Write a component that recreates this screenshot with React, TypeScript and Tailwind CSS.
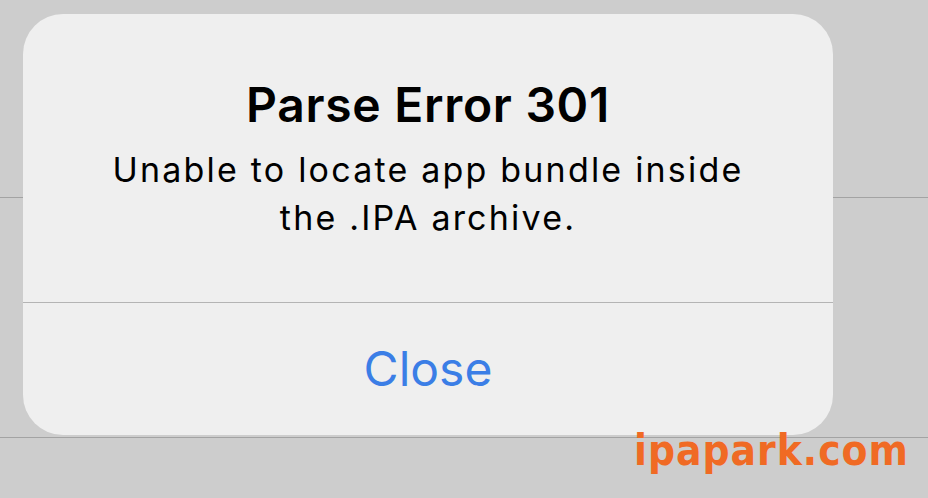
import React from "react";

export default function App() {
  return (
    <div className="relative w-[928px] h-[498px] overflow-hidden bg-[#cdcdcd]">
      {/* background rows */}
      <div className="flex flex-col">
        <div className="h-[198px] border-b border-[#a3a3a3]" />
        <div className="h-[240px] border-b border-[#a3a3a3]" />
      </div>

      {/* alert dialog */}
      <div
        className="absolute left-[23px] top-[14px] w-[810px] h-[421px] rounded-[40px] bg-[#efefef] flex flex-col"
        style={{ fontFamily: "Inter, 'Liberation Sans', sans-serif" }}
      >
        <div className="h-[288px] flex flex-col items-center pt-[67px] text-black">
          <div className="text-[48px] leading-[48px] font-semibold tracking-[0.7px]">Parse Error 301</div>
          <div className="mt-[17px] text-[34px] leading-[48px] text-center tracking-[2.2px]">
            Unable to locate app bundle inside
            <br />
            the .IPA archive.
          </div>
        </div>
        <div className="h-px bg-[#b4b4b4]" />
        <div className="flex-1 flex items-center justify-center">
          <div className="text-[48px] leading-[48px] text-[#3b7ee6]">Close</div>
        </div>
      </div>

      {/* watermark */}
      <div
        className="absolute left-[634px] top-[426px] text-[42px] leading-[50px] font-bold tracking-[1px] text-[#f06a24]"
        style={{ fontFamily: "'DejaVu Sans Condensed', 'DejaVu Sans', sans-serif" }}
      >
        ipapark.com
      </div>
    </div>
  );
}
